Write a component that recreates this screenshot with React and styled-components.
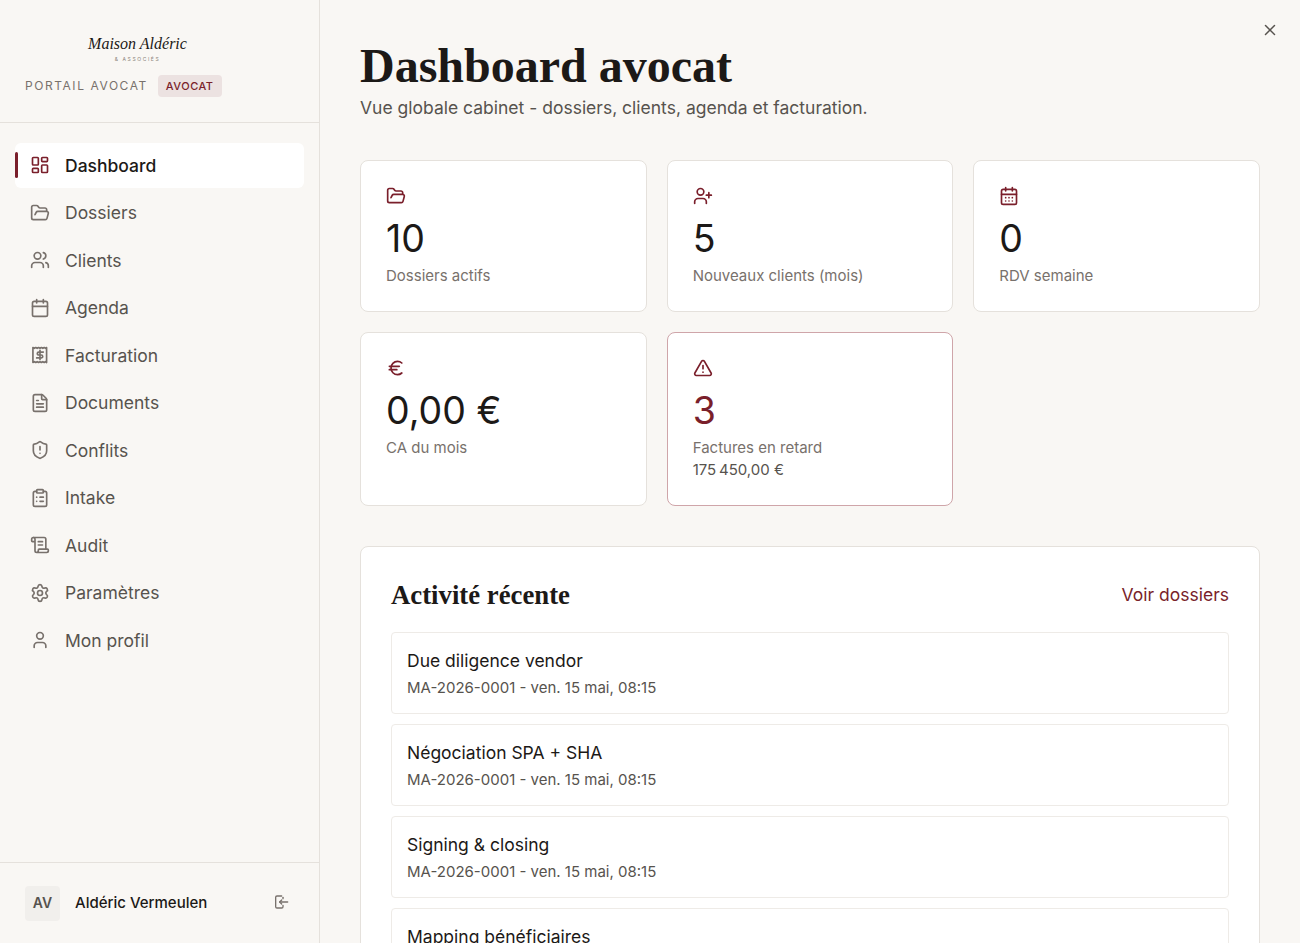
import React from "react";
import styled, { createGlobalStyle } from "styled-components";
import {
  LayoutDashboard,
  FolderOpen,
  Users,
  Calendar,
  CalendarDays,
  FileText,
  ShieldAlert,
  ClipboardList,
  ScrollText,
  Settings,
  User,
  UserPlus,
  Euro,
  TriangleAlert,
  X,
} from "lucide-react";

const GlobalStyle = createGlobalStyle`
  html, body {
    margin: 0;
    height: 100%;
    overflow: hidden;
    background: #f9f7f4;
  }
  * {
    box-sizing: border-box;
  }
  body {
    font-family: Inter, "Liberation Sans", sans-serif;
    color: #1c1917;
  }
`;

const Page = styled.div`
  display: flex;
  height: 943px;
  overflow: hidden;
`;

const Sidebar = styled.aside`
  width: 320px;
  flex-shrink: 0;
  display: flex;
  flex-direction: column;
  border-right: 1px solid #e5e1dc;
`;

const Brand = styled.div`
  height: 123px;
  flex-shrink: 0;
  padding: 34px 25px 0;
  border-bottom: 1px solid #e5e1dc;
`;

const LogoBox = styled.div`
  width: 225px;
  display: flex;
  flex-direction: column;
  align-items: center;
`;

const LogoName = styled.div`
  font-family: "Liberation Serif", serif;
  font-style: italic;
  font-size: 16px;
  line-height: 20px;
  color: #1c1917;
`;

const LogoSub = styled.div`
  font-size: 5px;
  line-height: 8px;
  margin-top: 1px;
  letter-spacing: 0.32em;
  color: #8a837b;
`;

const BrandRow = styled.div`
  display: flex;
  align-items: center;
  gap: 10px;
  margin-top: 12px;
`;

const PortalLabel = styled.span`
  font-size: 12px;
  line-height: 20px;
  padding-bottom: 1px;
  letter-spacing: 0.13em;
  color: #78716c;
`;

const RoleBadge = styled.span`
  font-size: 11px;
  font-weight: 500;
  line-height: 22px;
  letter-spacing: 0.045em;
  padding: 0 8px;
  border-radius: 4px;
  color: #7a1f2b;
  background: #ece2e1;
`;

const Nav = styled.nav`
  flex: 1;
  display: flex;
  flex-direction: column;
  gap: 2.5px;
  padding: 19.75px 15px 0;
`;

const NavItem = styled.a`
  position: relative;
  height: 45px;
  display: flex;
  align-items: center;
  gap: 15px;
  padding-left: 15px;
  font-size: 17.5px;
  border-radius: 6px;
  color: ${(p) => (p.$active ? "#1c1917" : "#57534e")};
  background: ${(p) => (p.$active ? "#fff" : "transparent")};
  font-weight: ${(p) => (p.$active ? 500 : 400)};
  svg {
    color: ${(p) => (p.$active ? "#7a1f2b" : "#78716c")};
    flex-shrink: 0;
  }
  &::before {
    content: "";
    display: ${(p) => (p.$active ? "block" : "none")};
    position: absolute;
    left: 0;
    top: 9px;
    width: 3px;
    height: 26px;
    border-radius: 2px;
    background: #7a1f2b;
  }
`;

const UserBar = styled.div`
  height: 81px;
  flex-shrink: 0;
  display: flex;
  align-items: center;
  gap: 15px;
  padding: 0 30px 2px 25px;
  border-top: 1px solid #e5e1dc;
`;

const Avatar = styled.div`
  width: 35px;
  height: 35px;
  margin-top: 2px;
  padding-bottom: 1px;
  display: flex;
  align-items: center;
  justify-content: center;
  font-size: 14px;
  font-weight: 600;
  color: #57534e;
  background: #f1efec;
  border-radius: 4px;
`;

const UserName = styled.div`
  flex: 1;
  font-size: 15px;
  font-weight: 500;
`;

const Main = styled.main`
  position: relative;
  flex: 1;
  padding: 40px 40px 0;
  overflow: hidden;
`;

const CloseButton = styled.button`
  position: absolute;
  top: 20px;
  right: 20px;
  width: 20px;
  height: 20px;
  padding: 0;
  display: flex;
  align-items: center;
  justify-content: center;
  border: 0;
  background: none;
  color: #57534e;
`;

const Title = styled.h1`
  margin: 1px 0 0;
  font-family: "Liberation Serif", serif;
  font-weight: 700;
  font-size: 48px;
  line-height: 50px;
  color: #1c1917;
`;

const Subtitle = styled.p`
  margin: 4px 0 0;
  font-size: 17.5px;
  line-height: 26px;
  color: #57534e;
`;

const StatGrid = styled.div`
  display: grid;
  grid-template-columns: repeat(3, 1fr);
  gap: 20px;
  margin-top: 39px;
`;

const StatCard = styled.div`
  padding: 25px 25px 24.5px;
  background: #fff;
  border: 1px solid ${(p) => (p.$alert ? "#cfa5a9" : "#e5e1dc")};
  border-radius: 8px;
`;

const StatIcon = styled.div`
  height: 20px;
  display: flex;
  color: #7a1f2b;
`;

const StatValue = styled.div`
  margin-top: 9px;
  font-size: 37.5px;
  line-height: 48.5px;
  color: ${(p) => (p.$alert ? "#7a1f2b" : "#1c1917")};
`;

const StatLabel = styled.div`
  margin-top: 1px;
  font-size: 15px;
  line-height: 22px;
  color: #78716c;
`;

const StatNote = styled.div`
  font-size: 15px;
  line-height: 22px;
  letter-spacing: -0.01em;
  color: #57534e;
`;

const Panel = styled.section`
  margin-top: 40px;
  padding: 30px;
  background: #fff;
  border: 1px solid #e5e1dc;
  border-radius: 8px;
`;

const PanelHead = styled.div`
  display: flex;
  align-items: center;
  justify-content: space-between;
  height: 36px;
  margin-bottom: 19px;
`;

const PanelTitle = styled.h2`
  margin: 0;
  font-family: "Liberation Serif", serif;
  font-weight: 700;
  font-size: 26.75px;
  color: #1c1917;
`;

const PanelLink = styled.a`
  padding-bottom: 2px;
  font-size: 17.5px;
  color: #7a1f2b;
`;

const ActivityList = styled.div`
  display: flex;
  flex-direction: column;
  gap: 10px;
`;

const ActivityRow = styled.div`
  height: 82px;
  padding: 15px;
  border: 1px solid #eeebe7;
  border-radius: 4px;
`;

const ActivityTitle = styled.div`
  font-size: 17.5px;
  line-height: 26px;
  color: #1c1917;
`;

const ActivityMeta = styled.div`
  margin-top: 3px;
  font-size: 15px;
  line-height: 22px;
  color: #57534e;
`;

const BillIcon = () => (
  <svg width="20" height="20" viewBox="0 0 24 24" fill="none" stroke="currentColor" strokeWidth="2" strokeLinecap="round" strokeLinejoin="round">
    <path d="M3.5 3v18l1.7-1 1.7 1 1.7-1 1.7 1 1.7-1 1.7 1 1.7-1 1.7 1 1.6-1 1.2 1V3l-1.2 1-1.6-1-1.7 1-1.7-1-1.7 1-1.7-1-1.7 1-1.7-1-1.7 1z" />
    <path d="M16 8.5h-5.5a1.75 1.75 0 0 0 0 3.5h3a1.75 1.75 0 0 1 0 3.5H8" />
    <path d="M12 6.5v11" />
  </svg>
);

const ExitIcon = () => (
  <svg width="16" height="16" viewBox="0 0 24 24" fill="none" stroke="#78716c" strokeWidth="2" strokeLinecap="round" strokeLinejoin="round">
    <path d="M13 3H6a2 2 0 0 0-2 2v14a2 2 0 0 0 2 2h7a2 2 0 0 0 2-2v-2" />
    <path d="M15 5v2" />
    <path d="M22 12H10" />
    <path d="m13 9-3 3 3 3" />
  </svg>
);

const navItems = [
  { label: "Dashboard", icon: LayoutDashboard, active: true },
  { label: "Dossiers", icon: FolderOpen },
  { label: "Clients", icon: Users },
  { label: "Agenda", icon: Calendar },
  { label: "Facturation", icon: BillIcon },
  { label: "Documents", icon: FileText },
  { label: "Conflits", icon: ShieldAlert },
  { label: "Intake", icon: ClipboardList },
  { label: "Audit", icon: ScrollText },
  { label: "Paramètres", icon: Settings },
  { label: "Mon profil", icon: User },
];

const stats = [
  { icon: FolderOpen, value: "10", label: "Dossiers actifs" },
  { icon: UserPlus, value: "5", label: "Nouveaux clients (mois)" },
  { icon: CalendarDays, value: "0", label: "RDV semaine" },
  { icon: Euro, value: "0,00 €", label: "CA du mois" },
  {
    icon: TriangleAlert,
    value: "3",
    label: "Factures en retard",
    note: "175\u202f450,00 €",
    alert: true,
  },
];

const activity = [
  "Due diligence vendor",
  "Négociation SPA + SHA",
  "Signing & closing",
  "Mapping bénéficiaires",
];

const App = () => {
  return (
    <Page>
      <GlobalStyle />
      <Sidebar>
        <Brand>
          <LogoBox>
            <LogoName>Maison Aldéric</LogoName>
            <LogoSub>& ASSOCIÉS</LogoSub>
          </LogoBox>
          <BrandRow>
            <PortalLabel>PORTAIL AVOCAT</PortalLabel>
            <RoleBadge>AVOCAT</RoleBadge>
          </BrandRow>
        </Brand>
        <Nav>
          {navItems.map(({ label, icon: Icon, active }) => (
            <NavItem key={label} $active={active}>
              <Icon size={20} />
              {label}
            </NavItem>
          ))}
        </Nav>
        <UserBar>
          <Avatar>AV</Avatar>
          <UserName>Aldéric Vermeulen</UserName>
          <ExitIcon />
        </UserBar>
      </Sidebar>
      <Main>
        <CloseButton aria-label="Fermer">
          <X size={18} />
        </CloseButton>
        <Title>Dashboard avocat</Title>
        <Subtitle>Vue globale cabinet - dossiers, clients, agenda et facturation.</Subtitle>
        <StatGrid>
          {stats.map(({ icon: Icon, value, label, note, alert }) => (
            <StatCard key={label} $alert={alert}>
              <StatIcon>
                <Icon size={20} />
              </StatIcon>
              <StatValue $alert={alert}>{value}</StatValue>
              <StatLabel>{label}</StatLabel>
              {note && <StatNote>{note}</StatNote>}
            </StatCard>
          ))}
        </StatGrid>
        <Panel>
          <PanelHead>
            <PanelTitle>Activité récente</PanelTitle>
            <PanelLink>Voir dossiers</PanelLink>
          </PanelHead>
          <ActivityList>
            {activity.map((title) => (
              <ActivityRow key={title}>
                <ActivityTitle>{title}</ActivityTitle>
                <ActivityMeta>MA-2026-0001 - ven. 15 mai, 08:15</ActivityMeta>
              </ActivityRow>
            ))}
          </ActivityList>
        </Panel>
      </Main>
    </Page>
  );
};

export default App;
